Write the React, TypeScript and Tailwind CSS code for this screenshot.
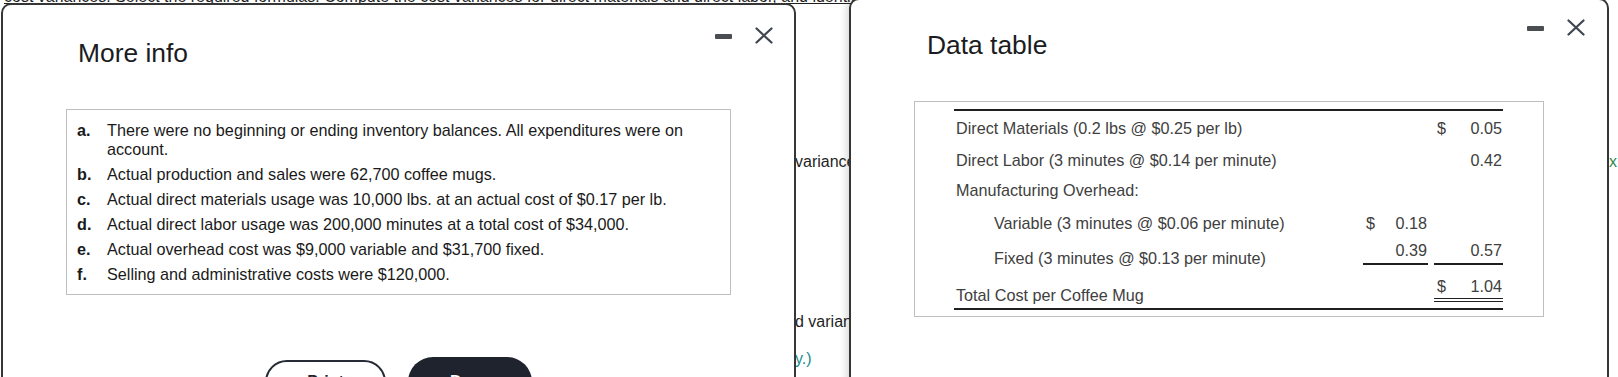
const infoItems = [
  ['a.', 'There were no beginning or ending inventory balances. All expenditures were on account.'],
  ['b.', 'Actual production and sales were 62,700 coffee mugs.'],
  ['c.', 'Actual direct materials usage was 10,000 lbs. at an actual cost of $0.17 per lb.'],
  ['d.', 'Actual direct labor usage was 200,000 minutes at a total cost of $34,000.'],
  ['e.', 'Actual overhead cost was $9,000 variable and $31,700 fixed.'],
  ['f.', 'Selling and administrative costs were $120,000.'],
];

function WindowControls() {
  return (
    <div className="flex items-start gap-[23px]">
      <span className="mt-[7px] block h-[5px] w-[17px] rounded-[1px] bg-[#4a4d52]" />
      <svg width="18" height="17" viewBox="0 0 18 17">
        <path d="M1.5 1.5 L16.5 15.5 M16.5 1.5 L1.5 15.5" stroke="#3f4651" strokeWidth="2.2" strokeLinecap="round" />
      </svg>
    </div>
  );
}

function Amount({ value, dollar }: { value: string; dollar?: boolean }) {
  return (
    <div className="flex justify-between pl-[3px] pr-[1px]">
      <span>{dollar ? '$' : ''}</span>
      <span>{value}</span>
    </div>
  );
}

export default function App() {
  return (
    <div className="relative h-[377px] w-[1618px] overflow-hidden bg-white font-['Liberation_Sans',Arial,sans-serif]">
      {/* page under the two windows */}
      <div className="text-[16px] leading-[18px] text-[#1f1f1f]">
        <div className="-mt-[12px] whitespace-nowrap pl-[4px] underline">
          cost variances. Select the required formulas. Compute the cost variances for direct materials and direct labor, and identify
        </div>
        <div className="mt-[147px] flex whitespace-nowrap pl-[795px]">
          <span className="w-[814px]">variance</span>
          <span className="text-[#2d8a4e]">x</span>
        </div>
        <div className="mt-[142px] whitespace-nowrap pl-[795px]">d variance</div>
        <div className="mt-[19px] whitespace-nowrap pl-[795px] text-[#1a8c8c]">y.)</div>
      </div>

      {/* More info window */}
      <div className="absolute left-[1px] top-[3px] flex h-[420px] w-[795px] flex-col rounded-t-[10px] border-2 border-[#363636] bg-white">
        <div className="flex items-start pl-[75px] pr-[21px]">
          <h2 className="pt-[33px] text-[26.4px] leading-[30px] text-[#1a1c22]">More info</h2>
          <div className="ml-auto mt-[22px]">
            <WindowControls />
          </div>
        </div>

        <div className="ml-[63px] mt-[41px] w-[665px] border border-[#bfbfbf] px-[10px] pb-[10px] pt-[11px]">
          <ul className="flex flex-col gap-[6px] text-[16.2px] leading-[19px] text-[#1a1a1a]">
            {infoItems.map(([label, text]) => (
              <li key={label} className="flex">
                <span className="w-[30px] shrink-0 font-bold">{label}</span>
                <span className="flex-1">{text}</span>
              </li>
            ))}
          </ul>
        </div>

        <div className="mt-[62px] flex items-start justify-center gap-[22px]">
          <button className="mt-[3px] flex h-[44px] w-[121px] items-center justify-center rounded-full border-2 border-[#262b35] text-[16px] font-bold text-[#1e232d]">
            Print
          </button>
          <button className="flex h-[50px] w-[124px] items-center justify-center rounded-full bg-[#1e232d] text-[16px] font-bold text-white">
            Done
          </button>
        </div>
      </div>

      {/* Data table window */}
      <div className="absolute left-[849px] top-[-2px] flex h-[420px] w-[760px] flex-col rounded-t-[10px] border-2 border-[#363636] bg-white shadow-[-5px_0_7px_-2px_rgba(0,0,0,0.14)]">
        <div className="flex items-start pl-[76px] pr-[22px]">
          <h2 className="pt-[30px] text-[26.4px] leading-[30px] text-[#1a1c22]">Data table</h2>
          <div className="ml-auto mt-[19px]">
            <WindowControls />
          </div>
        </div>

        <div className="ml-[63px] mt-[41px] w-[630px] border border-[#bfbfbf] pb-[6px] pl-[39px] pr-[40px] pt-[7px]">
          <div className="border-y-2 border-[#1f1f1f] text-[16.2px] leading-[18px] text-[#404040]">
            <div className="grid h-[31px] grid-cols-[1fr_65px_69px] items-end gap-x-[6px]">
              <div className="pb-[5px] pl-[2px]">Direct Materials (0.2 lbs @ $0.25 per lb)</div>
              <div />
              <div className="pb-[5px]"><Amount value="0.05" dollar /></div>
            </div>
            <div className="grid h-[32px] grid-cols-[1fr_65px_69px] items-end gap-x-[6px]">
              <div className="pb-[5px] pl-[2px]">Direct Labor (3 minutes @ $0.14 per minute)</div>
              <div />
              <div className="pb-[5px]"><Amount value="0.42" /></div>
            </div>
            <div className="grid h-[30px] grid-cols-[1fr_65px_69px] items-end gap-x-[6px]">
              <div className="pb-[5px] pl-[2px]">Manufacturing Overhead:</div>
            </div>
            <div className="grid h-[33px] grid-cols-[1fr_65px_69px] items-end gap-x-[6px]">
              <div className="pb-[5px] pl-[40px]">Variable (3 minutes @ $0.06 per minute)</div>
              <div className="pb-[5px]"><Amount value="0.18" dollar /></div>
              <div />
            </div>
            <div className="grid h-[35px] grid-cols-[1fr_65px_69px] items-end gap-x-[6px]">
              <div className="pb-[5px] pl-[40px]">Fixed (3 minutes @ $0.13 per minute)</div>
              <div className="mb-[7px] border-b-2 border-[#1f1f1f] pb-[4px]"><Amount value="0.39" /></div>
              <div className="mb-[7px] border-b-2 border-[#1f1f1f] pb-[4px]"><Amount value="0.57" /></div>
            </div>
            <div className="grid h-[36px] grid-cols-[1fr_65px_69px] items-end gap-x-[6px]">
              <div className="pb-[4px] pl-[2px]">Total Cost per Coffee Mug</div>
              <div />
              <div className="mb-[6px] border-b-4 border-double border-[#1f1f1f] pb-[3px]"><Amount value="1.04" dollar /></div>
            </div>
          </div>
        </div>
      </div>
    </div>
  );
}
